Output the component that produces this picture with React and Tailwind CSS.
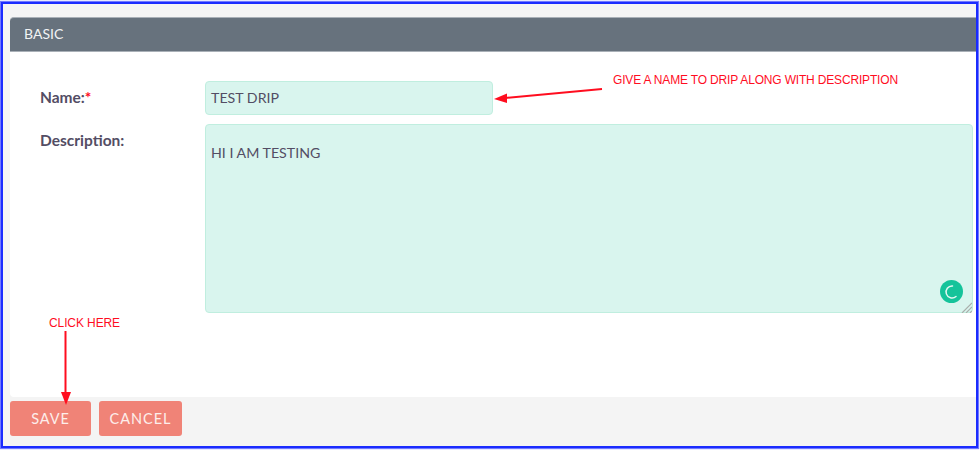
const annotationFont = "font-['Liberation_Sans',Arial,sans-serif]"

function Arrows() {
  return (
    <svg className="absolute left-0 top-0 pointer-events-none" width="980" height="450" viewBox="0 0 980 450">
      <line x1="602" y1="89" x2="505" y2="98" stroke="#ff0d1f" strokeWidth="2" />
      <polygon points="494,99 507,93.5 507,103" fill="#ff0d1f" />
      <line x1="65.5" y1="331" x2="65.5" y2="394" stroke="#ff0d1f" strokeWidth="2" />
      <polygon points="66,405 61,392 71,392" fill="#ff0d1f" />
    </svg>
  )
}

function GrammarlyBadge() {
  return (
    <div className="absolute left-[940px] top-[280px] w-[23px] h-[23px] rounded-full bg-[#15c39a]">
      <svg width="23" height="23" viewBox="0 0 23 23" fill="none">
        <path d="M12.5 6 A6 6 0 1 0 16 16.5" stroke="#e3f7f1" strokeWidth="1.5" strokeLinecap="round" />
      </svg>
    </div>
  )
}

function ResizeGrip() {
  return (
    <svg className="absolute left-[961px] top-[302px]" width="11" height="11" viewBox="0 0 11 11">
      <path d="M1 11 L11 1 M5 11 L11 5 M9 11 L11 9" stroke="#a9b0ac" strokeWidth="1.2" />
    </svg>
  )
}

function Row({ label, required, children }) {
  return (
    <div className="flex">
      <div className="w-[165px] shrink-0 pt-[6px] text-[15.5px] leading-[20px] font-bold text-[#534d64]">
        {label}
        {required && <span className="text-[#ff0d1f]">*</span>}
      </div>
      {children}
    </div>
  )
}

export default function App() {
  return (
    <div className="relative w-[980px] h-[450px] bg-white overflow-hidden font-['Lato',sans-serif]">
      <div className="mt-[2px] ml-[1px] w-[977px] h-[446px] border-[2px] border-[#1a2bff] shadow-[0_0_1px_1px_#6f78ff] bg-[#f4f4f4] flex flex-col pt-[13px] pl-[7px]">
        <div className="h-[35px] shrink-0 bg-[#67727d] border-y border-[#a9b0b7] rounded-tl-[4px] flex items-center pl-[14px] pb-[2px] text-[14px] text-[#f2f4f5]">
          BASIC
        </div>
        <div className="h-[345px] shrink-0 bg-white rounded-bl-[4px] flex flex-col gap-[9px] pt-[29px] pl-[30px]">
          <Row label="Name:" required>
            <div className="w-[288px] h-[34px] rounded-[4px] border border-[#c0eedf] bg-[#d9f5ee] flex items-center pl-[5px] pb-[1px] text-[14.2px] text-[#534d64]">
              TEST DRIP
            </div>
          </Row>
          <Row label="Description:">
            <div className="w-[768px] h-[189px] rounded-[4px] border border-[#c0eedf] bg-[#d9f5ee] pl-[5px] pt-[18px] text-[14.2px] leading-[20px] text-[#534d64]">
              HI I AM TESTING
            </div>
          </Row>
        </div>
        <div className="flex gap-[8px] pt-[4px]">
          <button className="w-[81px] h-[35px] rounded-[3px] bg-[#f08377] text-[14.5px] tracking-[0.9px] text-[#fdeeeb]">SAVE</button>
          <button className="w-[83px] h-[35px] rounded-[3px] bg-[#f08377] text-[14.5px] tracking-[1px] text-[#fdeeeb]">CANCEL</button>
        </div>
      </div>

      <div className={`absolute left-[613px] top-[73px] text-[12px] tracking-[-0.17px] leading-[14px] text-[#ff0d1f] whitespace-nowrap ${annotationFont}`}>
        GIVE A NAME TO DRIP ALONG WITH DESCRIPTION
      </div>
      <div className={`absolute left-[49px] top-[316px] text-[12px] tracking-[-0.1px] leading-[14px] text-[#ff0d1f] whitespace-nowrap ${annotationFont}`}>
        CLICK HERE
      </div>
      <GrammarlyBadge />
      <ResizeGrip />
      <Arrows />
    </div>
  )
}
